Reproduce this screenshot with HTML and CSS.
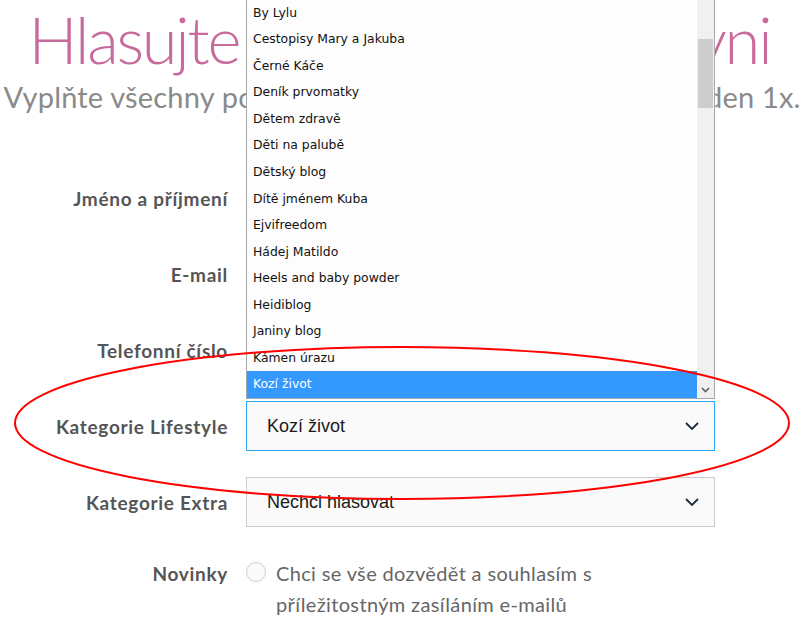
FILE: index.html
```html
<!DOCTYPE html>
<html lang="cs">
<head>
<meta charset="utf-8">
<title>Hlasování</title>
<link rel="stylesheet" href="styles.css">
</head>
<body>
<div class="page">
  <header class="head">
    <h1 class="title">Hlasujte pro vaši blog bohyni</h1>
    <p class="subtitle">Vyplňte všechny položky formuláře, hlasovat lze každý den 1x.</p>
  </header>

  <form class="form">
    <label class="label">Jméno a příjmení</label>
    <div class="field"><input class="input" type="text"></div>

    <label class="label">E-mail</label>
    <div class="field"><input class="input" type="text"></div>

    <label class="label">Telefonní číslo</label>
    <div class="field"><input class="input" type="text"></div>

    <label class="label">Kategorie Lifestyle</label>
    <div class="field field-open">
      <div class="select select-focus">
        <span class="select-value">Kozí život</span>
        <svg class="chev" width="14" height="8" viewBox="0 0 14 8"><path d="M1 1l6 6 6-6" fill="none" stroke="#1d2a3a" stroke-width="1.8"/></svg>
      </div>
      <div class="dropdown">
        <ul class="options">
          <li>By Lylu</li>
          <li>Cestopisy Mary a Jakuba</li>
          <li>Černé Káče</li>
          <li>Deník prvomatky</li>
          <li>Dětem zdravě</li>
          <li>Děti na palubě</li>
          <li>Dětský blog</li>
          <li>Dítě jménem Kuba</li>
          <li>Ejvifreedom</li>
          <li>Hádej Matildo</li>
          <li>Heels and baby powder</li>
          <li>Heidiblog</li>
          <li>Janiny blog</li>
          <li>Kámen úrazu</li>
          <li class="selected">Kozí život</li>
        </ul>
        <div class="scrollbar">
          <div class="thumb"></div>
          <div class="arrow"><svg width="9" height="6" viewBox="0 0 9 6"><path d="M1 1l3.5 3.5L8 1" fill="none" stroke="#606060" stroke-width="1.6"/></svg></div>
        </div>
      </div>
    </div>

    <label class="label">Kategorie Extra</label>
    <div class="field">
      <div class="select">
        <span class="select-value">Nechci hlasovat</span>
        <svg class="chev" width="14" height="8" viewBox="0 0 14 8"><path d="M1 1l6 6 6-6" fill="none" stroke="#1d2a3a" stroke-width="1.8"/></svg>
      </div>
    </div>

    <label class="label label-top">Novinky</label>
    <div class="field field-check">
      <span class="radio"></span>
      <span class="check-text">Chci se vše dozvědět a souhlasím s příležitostným zasíláním e-mailů</span>
    </div>
  </form>

  <svg class="annotation" width="808" height="630" viewBox="0 0 808 630">
    <ellipse cx="402" cy="423" rx="387" ry="76" fill="none" stroke="#ff0000" stroke-width="2"/>
  </svg>
</div>
</body>
</html>
```

FILE: styles.css
```css
html, body {
  margin: 0;
  padding: 0;
  background: #ffffff;
}

.page {
  position: relative;
  width: 808px;
  height: 630px;
  overflow: hidden;
}

.head {
  text-align: center;
  white-space: nowrap;
}

.title {
  margin: -1px -100px 0 -100px;
  padding-right: 9px;
  font-family: Lato, "Open Sans", sans-serif;
  font-weight: 300;
  font-size: 65px;
  line-height: 80px;
  letter-spacing: -2.2px;
  color: #c86a9c;
}

.subtitle {
  margin: 0 -100px;
  padding-right: 4px;
  font-family: Lato, "Open Sans", sans-serif;
  font-weight: 400;
  font-size: 29px;
  line-height: 36px;
  letter-spacing: 0.18px;
  color: #8a8a8a;
}

.form {
  display: grid;
  grid-template-columns: 228px 469px;
  column-gap: 18px;
  row-gap: 26px;
  margin-top: 58px;
}

.label {
  align-self: center;
  text-align: right;
  font-family: Lato, "Open Sans", sans-serif;
  font-weight: 700;
  font-size: 19px;
  letter-spacing: 0.7px;
  color: #555555;
}

.label-top {
  align-self: start;
  line-height: 31px;
  padding-top: 5px;
}

.field {
  height: 50px;
  position: relative;
}

.input {
  box-sizing: border-box;
  width: 100%;
  height: 50px;
  border: 1px solid #cccccc;
  background: #fafafa;
  margin: 0;
}

.select {
  box-sizing: border-box;
  height: 50px;
  border: 1px solid #cccccc;
  background: #fafafa;
  display: flex;
  align-items: center;
  padding: 0 15px 0 20px;
  font-family: "Liberation Sans", Arial, sans-serif;
  font-size: 18px;
  color: #1a1a1a;
}

.select-focus {
  border-color: #2aa4f4;
}

.select-value {
  flex: 1;
}

.chev {
  display: block;
}

.dropdown {
  position: absolute;
  left: 0;
  bottom: calc(100% + 2px);
  box-sizing: border-box;
  width: 469px;
  height: 404px;
  border: 1px solid #a8a8a8;
  background: #fdfdfd;
  display: flex;
  overflow: hidden;
}

.options {
  list-style: none;
  margin: 0;
  padding: 0;
  flex: 1;
  display: flex;
  flex-direction: column;
  justify-content: flex-end;
  font-family: "DejaVu Sans", Verdana, sans-serif;
  font-size: 12.4px;
  color: #111111;
}

.options li {
  height: 26.57px;
  line-height: 26.57px;
  padding-left: 6px;
  flex: none;
}

.options .selected {
  background: #3399ff;
  color: #ffffff;
}

.scrollbar {
  width: 17px;
  background: #f0f0f0;
  display: flex;
  flex-direction: column;
  justify-content: space-between;
}

.thumb {
  margin: 43px 1px 0 1px;
  height: 69px;
  background: #cdcdcd;
}

.arrow {
  height: 17px;
  display: flex;
  align-items: center;
  justify-content: center;
}

.field-check {
  height: auto;
  display: flex;
  align-items: flex-start;
  gap: 10px;
  padding-top: 5px;
}

.radio {
  flex: none;
  box-sizing: border-box;
  width: 20px;
  height: 20px;
  margin-top: 4px;
  border: 1px solid #d0d0d0;
  border-radius: 50%;
  background: #fafafa;
}

.check-text {
  font-family: Lato, "Open Sans", sans-serif;
  font-size: 20px;
  letter-spacing: 0.35px;
  line-height: 31px;
  color: #666666;
  width: 345px;
}

.annotation {
  position: absolute;
  left: 0;
  top: 0;
  pointer-events: none;
}
```
